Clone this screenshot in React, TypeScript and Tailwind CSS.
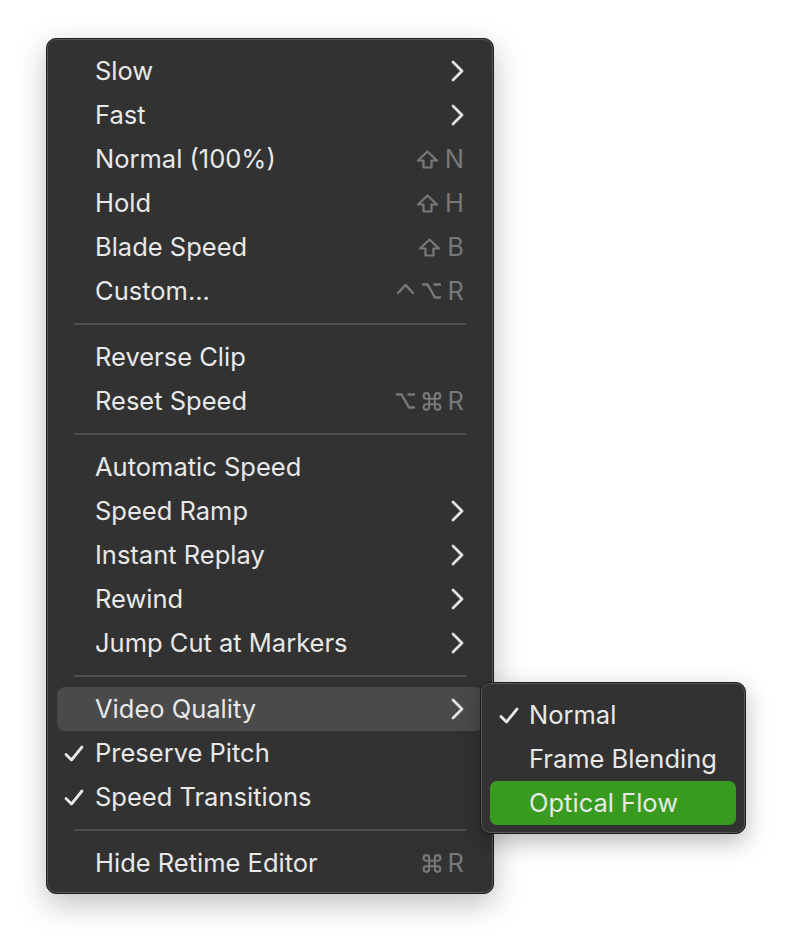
import React from "react";

type Key = "shift" | "ctrl" | "opt" | "cmd" | string;

type Item =
  | { type: "sep" }
  | {
      type?: "item";
      label: string;
      checked?: boolean;
      submenu?: boolean;
      shortcut?: Key[];
      active?: boolean;
    };

const items: Item[] = [
  { label: "Slow", submenu: true },
  { label: "Fast", submenu: true },
  { label: "Normal (100%)", shortcut: ["shift", "N"] },
  { label: "Hold", shortcut: ["shift", "H"] },
  { label: "Blade Speed", shortcut: ["shift", "B"] },
  { label: "Custom...", shortcut: ["ctrl", "opt", "R"] },
  { type: "sep" },
  { label: "Reverse Clip" },
  { label: "Reset Speed", shortcut: ["opt", "cmd", "R"] },
  { type: "sep" },
  { label: "Automatic Speed" },
  { label: "Speed Ramp", submenu: true },
  { label: "Instant Replay", submenu: true },
  { label: "Rewind", submenu: true },
  { label: "Jump Cut at Markers", submenu: true },
  { type: "sep" },
  { label: "Video Quality", submenu: true, active: true },
  { label: "Preserve Pitch", checked: true },
  { label: "Speed Transitions", checked: true },
  { type: "sep" },
  { label: "Hide Retime Editor", shortcut: ["cmd", "R"] },
];

function Check() {
  return (
    <svg width="20" height="17" viewBox="0 0 20 17" className="shrink-0">
      <path
        d="M2 9.5 L7.5 15 L18 2"
        fill="none"
        stroke="#e8e8e8"
        strokeWidth="2.8"
        strokeLinecap="round"
        strokeLinejoin="round"
      />
    </svg>
  );
}

function Chevron() {
  return (
    <svg width="13" height="22" viewBox="0 0 13 22">
      <path
        d="M2 2 L11 11 L2 20"
        fill="none"
        stroke="#e4e4e4"
        strokeWidth="2.8"
        strokeLinecap="round"
        strokeLinejoin="round"
      />
    </svg>
  );
}

// modifier key glyphs, drawn to match the macOS shortcut column
function KeyGlyph({ k }: { k: Key }) {
  const stroke = "#787878";
  if (k === "shift") {
    return (
      <svg width="23" height="19" viewBox="0 0 23 19">
        <path
          d="M11.5 1.5 L21 10.5 L15.5 10.5 L15.5 17.5 L7.5 17.5 L7.5 10.5 L2 10.5 Z"
          fill="none"
          stroke={stroke}
          strokeWidth="2.2"
          strokeLinejoin="round"
        />
      </svg>
    );
  }
  if (k === "ctrl") {
    return (
      <svg width="19" height="18" viewBox="0 0 19 18">
        <path
          d="M2 11 L9.5 3 L17 11"
          fill="none"
          stroke={stroke}
          strokeWidth="2.4"
          strokeLinecap="round"
          strokeLinejoin="round"
        />
      </svg>
    );
  }
  if (k === "opt") {
    return (
      <svg width="21" height="18" viewBox="0 0 21 18">
        <path
          d="M1 2.5 H6.5 L14 15.5 H20 M12.5 2.5 H20"
          fill="none"
          stroke={stroke}
          strokeWidth="2.4"
        />
      </svg>
    );
  }
  if (k === "cmd") {
    return (
      <svg width="20" height="19" viewBox="1.8 1.8 20.4 20.4">
        <path
          d="M15 6v12a3 3 0 1 0 3-3H6a3 3 0 1 0 3 3V6a3 3 0 1 0-3 3h12a3 3 0 1 0-3-3"
          fill="none"
          stroke={stroke}
          strokeWidth="2.2"
          strokeLinecap="round"
          strokeLinejoin="round"
        />
      </svg>
    );
  }
  return <span className="leading-none">{k}</span>;
}

function SubMenu() {
  const subs = [
    { label: "Normal", checked: true },
    { label: "Frame Blending" },
    { label: "Optical Flow", selected: true },
  ];
  return (
    <div className="absolute left-[423px] top-[-5px] z-10 w-[266px] rounded-[10px] border border-[#1c1c1c] bg-[#323232] pt-[10px] pb-[8px] shadow-[inset_0_0_0_1px_#585858,0_8px_24px_rgba(0,0,0,0.28)]">
      {subs.map((s, i) => (
        <div
          key={i}
          className={
            s.selected
              ? "mx-[9px] flex h-[44px] items-center rounded-[7px] bg-[#389b1f]"
              : "mx-[9px] flex h-[44px] items-center rounded-[7px]"
          }
        >
          <div className="flex w-[39px] justify-end pr-[10px]">
            {s.checked && <Check />}
          </div>
          <span>{s.label}</span>
        </div>
      ))}
    </div>
  );
}

export default function App() {
  return (
    <div
      className="min-h-screen w-full bg-white pl-[46px] pt-[38px] text-[25.5px] text-[#e8e8e8]"
      style={{ fontFamily: "Inter, 'Noto Sans', 'DejaVu Sans', sans-serif" }}
    >
      <div className="relative w-[448px] rounded-[10px] border border-[#1c1c1c] bg-[#323232] pt-[10px] pb-[8px] shadow-[inset_0_0_0_1px_#585858,0_10px_30px_rgba(0,0,0,0.25)]">
        {items.map((it, i) => {
          if (it.type === "sep") {
            return (
              <div key={i} className="flex h-[22px] items-center px-[27px]">
                <div className="h-[2px] w-full bg-[#505050]" />
              </div>
            );
          }
          return (
            <div
              key={i}
              className={
                it.active
                  ? "relative mx-[10px] flex h-[44px] items-center rounded-[8px] bg-[#4a4a4a]"
                  : "relative mx-[10px] flex h-[44px] items-center rounded-[8px]"
              }
            >
              <div className="flex w-[38px] justify-end pr-[11px]">
                {it.checked && <Check />}
              </div>
              <span className="flex-1 leading-none">{it.label}</span>
              <div className="flex items-center pr-[19px]">
                {it.submenu && <Chevron />}
                {it.shortcut && (
                  <span className="flex items-center gap-[6px] text-[#787878]">
                    {it.shortcut.map((k, j) => (
                      <KeyGlyph key={j} k={k} />
                    ))}
                  </span>
                )}
              </div>
              {it.active && <SubMenu />}
            </div>
          );
        })}
      </div>
    </div>
  );
}
